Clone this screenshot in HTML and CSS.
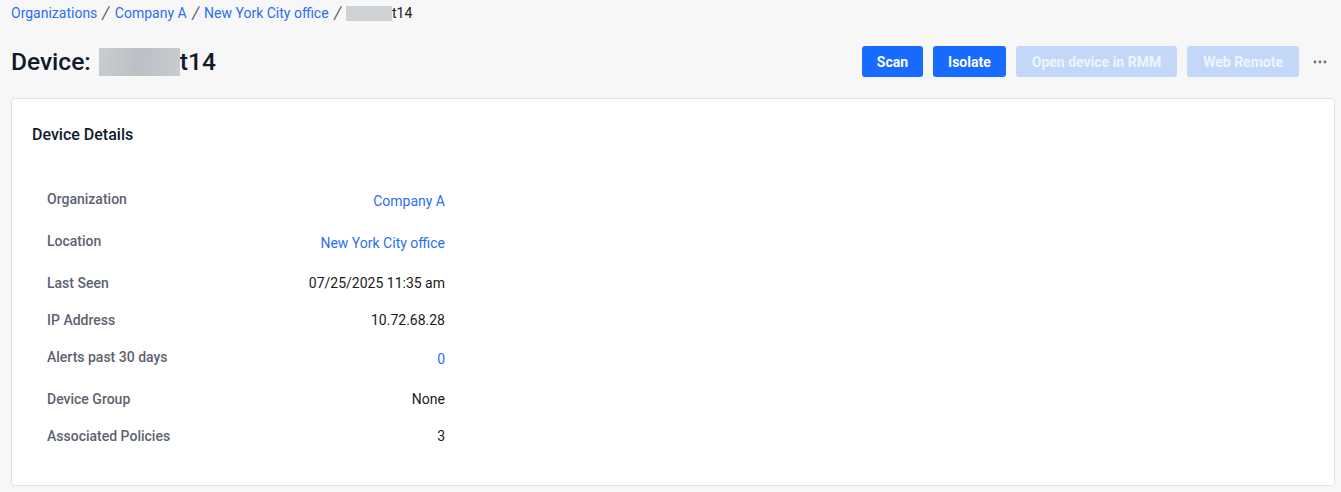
FILE: index.html
```html
<!DOCTYPE html>
<html lang="en">
<head>
<meta charset="utf-8">
<title>Device</title>
<link rel="stylesheet" href="styles.css">
</head>
<body>
<div class="page">
  <nav class="crumbs">
    <a class="crumb" href="#">Organizations</a><span class="sep">/</span><a class="crumb" href="#">Company A</a><span class="sep">/</span><a class="crumb" href="#">New York City office</a><span class="sep">/</span><span class="blur blur-sm"></span><span class="crumb-cur">t14</span>
  </nav>
  <header class="head">
    <h1 class="title">Device: <span class="blur blur-lg"></span>t14</h1>
    <div class="actions">
      <button class="btn">Scan</button>
      <button class="btn">Isolate</button>
      <button class="btn btn-off">Open device in RMM</button>
      <button class="btn btn-off">Web Remote</button>
      <span class="more"><svg width="14" height="4" viewBox="0 0 14 4"><circle cx="2" cy="2" r="1.4" fill="#6b6f76"/><circle cx="7" cy="2" r="1.4" fill="#6b6f76"/><circle cx="12" cy="2" r="1.4" fill="#6b6f76"/></svg></span>
    </div>
  </header>
  <section class="card">
    <h2 class="card-title">Device Details</h2>
    <div class="details">
      <div class="row"><span class="label">Organization</span><a class="val link" href="#">Company A</a></div>
      <div class="row"><span class="label">Location</span><a class="val link" href="#">New York City office</a></div>
      <div class="row"><span class="label">Last Seen</span><span class="val">07/25/2025 11:35 am</span></div>
      <div class="row"><span class="label">IP Address</span><span class="val">10.72.68.28</span></div>
      <div class="row"><span class="label">Alerts past 30 days</span><a class="val link" href="#">0</a></div>
      <div class="row"><span class="label">Device Group</span><span class="val">None</span></div>
      <div class="row"><span class="label">Associated Policies</span><span class="val">3</span></div>
    </div>
  </section>
</div>
</body>
</html>
```
FILE: styles.css
```css
* { box-sizing: border-box; }
html, body { margin: 0; padding: 0; }
body {
  background: #f7f7f7;
  font-family: Roboto, "Liberation Sans", Arial, sans-serif;
  color: #1b1b1b;
}
.page { padding: 0 6px 0 11px; }
.crumbs {
  padding-top: 3px;
  line-height: 20px;
  font-size: 14px;
  display: flex;
  align-items: center;
  height: 23px;
}
.crumb { color: #2a6ef2; text-decoration: none; }
.crumb-cur { color: #1b1b1b; }
.sep {
  color: #5f6368;
  font-size: 18px;
  margin: 0 5px;
  line-height: 20px;
  transform: skewX(-8deg);
}
.blur {
  display: inline-block;
  background: linear-gradient(100deg, #c9ccd0 0%, #bcc0c6 50%, #c8cbcf 100%);
  filter: blur(0.5px);
}
.blur-sm { width: 46px; height: 15px; background: #cfd2d5; }
.blur-lg { width: 81px; height: 28px; vertical-align: -6px; margin-left: 2px; }
.head {
  margin-top: 23px;
  height: 31px;
  display: flex;
  align-items: center;
  justify-content: space-between;
}
.title {
  margin: 0;
  font-size: 24.5px;
  font-weight: 500;
  color: #0f1a2b;
  line-height: 31px;
  white-space: nowrap;
}
.actions { display: flex; align-items: center; gap: 10px; }
.btn {
  height: 31px;
  padding: 0 15px;
  border: 0;
  border-radius: 3px;
  background: #176cff;
  color: #fff;
  font-family: inherit;
  font-size: 14px;
  font-weight: 700;
}
.btn-off { background: #c3d8f8; color: #eef4fe; padding: 0 16px; }
.more { display: flex; align-items: center; margin-left: 4px; width: 22px; }
.card {
  margin-top: 21px;
  height: 388px;
  background: #fff;
  border: 1px solid #e2e2e2;
  border-radius: 4px;
  padding: 24px 20px 0;
}
.card-title {
  margin: 0;
  font-size: 16px;
  font-weight: 500;
  line-height: 24px;
  color: #0f1a2b;
}
.details {
  margin: 33.5px 0 0 15px;
  width: 398px;
}
.row {
  display: flex;
  justify-content: space-between;
  align-items: flex-start;
  padding: 8px 0;
  font-size: 14px;
  line-height: 21px;
}
.label { color: #5d6370; font-weight: 500; }
.val { color: #1b1b1b; }
.link { color: #2a6ef2; text-decoration: none; padding: 2.5px 0; }
```
